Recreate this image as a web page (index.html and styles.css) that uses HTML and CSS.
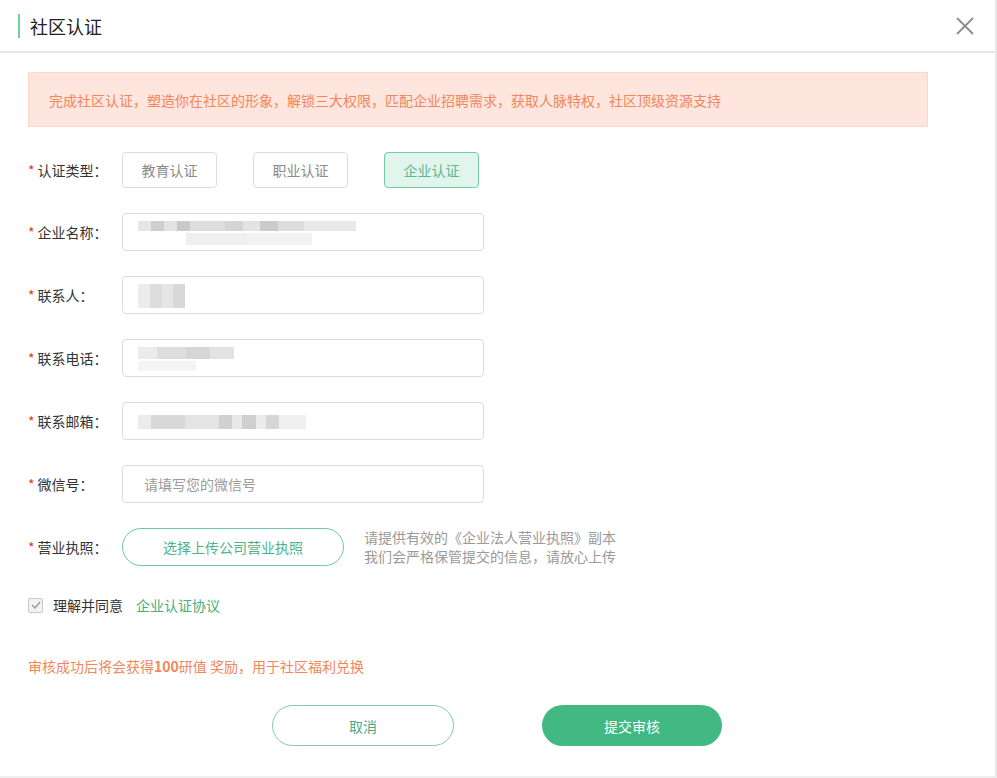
FILE: index.html
```html
<!DOCTYPE html>
<html lang="zh-CN">
<head>
  <meta charset="UTF-8" />
  <title>社区认证</title>
  <link rel="stylesheet" href="styles.css">
</head>
<body>
  <div class="dialog">
    <div class="dialog-head">
      <h1 class="dialog-title">社区认证</h1>
      <button class="close-btn" aria-label="关闭">
        <svg width="20" height="20" viewBox="0 0 20 20"><path d="M2 2L18 18M18 2L2 18" stroke="#8c8c8c" stroke-width="1.8" fill="none"/></svg>
      </button>
    </div>

    <div class="dialog-body">
      <div class="notice">完成社区认证，塑造你在社区的形象，解锁三大权限，匹配企业招聘需求，获取人脉特权，社区顶级资源支持</div>

      <div class="form-row">
        <label class="label"><i>*</i>认证类型：</label>
        <div class="type-group">
          <button class="type-btn">教育认证</button>
          <button class="type-btn">职业认证</button>
          <button class="type-btn active">企业认证</button>
        </div>
      </div>

      <div class="form-row">
        <label class="label"><i>*</i>企业名称：</label>
        <div class="input">
          <span class="blur blur-long"></span>
        </div>
      </div>

      <div class="form-row">
        <label class="label"><i>*</i>联系人：</label>
        <div class="input">
          <span class="blur blur-short"></span>
        </div>
      </div>

      <div class="form-row">
        <label class="label"><i>*</i>联系电话：</label>
        <div class="input">
          <span class="blur blur-phone"></span>
        </div>
      </div>

      <div class="form-row">
        <label class="label"><i>*</i>联系邮箱：</label>
        <div class="input">
          <span class="blur blur-mail"></span>
        </div>
      </div>

      <div class="form-row">
        <label class="label"><i>*</i>微信号：</label>
        <div class="input placeholder">请填写您的微信号</div>
      </div>

      <div class="form-row upload-row">
        <label class="label"><i>*</i>营业执照：</label>
        <button class="upload-btn">选择上传公司营业执照</button>
        <p class="upload-tip">请提供有效的《企业法人营业执照》副本<br>我们会严格保管提交的信息，请放心上传</p>
      </div>

      <div class="agree">
        <span class="checkbox">
          <svg width="10" height="8" viewBox="0 0 10 8"><path d="M1 4L4 7L9 1" stroke="#9a9a9a" stroke-width="1.4" fill="none"/></svg>
        </span>
        <span class="agree-text">理解并同意</span>
        <a class="agree-link" href="#">企业认证协议</a>
      </div>

      <p class="reward">审核成功后将会获得<b>100</b>研值 奖励，用于社区福利兑换</p>

      <div class="actions">
        <button class="btn btn-cancel">取消</button>
        <button class="btn btn-submit">提交审核</button>
      </div>
    </div>
  </div>
</body>
</html>
```

FILE: styles.css
```css
/* Reset & base */
*, *::before, *::after {
  box-sizing: border-box;
}
body {
  margin: 0;
  font-family: "Noto Sans CJK SC", "Noto Sans", sans-serif;
  background: #ffffff;
  color: #333;
  font-size: 14px;
}
button {
  font-family: inherit;
  cursor: pointer;
}

/* Dialog shell */
.dialog {
  width: 997px;
  height: 778px;
  border-right: 2px solid #e8e8e8;
  border-bottom: 2px solid #eeeeee;
}
.dialog-head {
  height: 53px;
  display: flex;
  align-items: center;
  justify-content: space-between;
  padding: 0 20px 0 18px;
  border-bottom: 2px solid #e6e6e6;
}
.dialog-title {
  margin: 0;
  font-size: 18px;
  font-weight: 400;
  color: #222;
  line-height: 24px;
  border-left: 2px solid #6fcfa8;
  padding-left: 10px;
}
.close-btn {
  background: none;
  border: none;
  padding: 0;
  width: 20px;
  height: 20px;
  display: flex;
}

/* Body */
.dialog-body {
  padding: 19px 0 0 28px;
}
.notice {
  width: 900px;
  height: 55px;
  background: #fee5dd;
  border: 1px solid #fbd6c9;
  color: #f2875a;
  font-size: 14px;
  display: flex;
  align-items: center;
  padding-left: 20px;
}

/* Form rows */
.form-row {
  display: flex;
  align-items: center;
  margin-top: 25px;
}
.label {
  width: 94px;
  flex-shrink: 0;
  color: #333;
}
.label i {
  font-style: normal;
  color: #e5342f;
  margin-right: 3px;
}
.type-group {
  display: flex;
  gap: 36px;
}
.type-btn {
  width: 95px;
  height: 36px;
  background: #fff;
  border: 1px solid #dcdcdc;
  border-radius: 4px;
  color: #8a8a8a;
  font-size: 14px;
}
.type-btn.active {
  background: #e2f5ec;
  border-color: #74cba4;
  color: #5cb88f;
}
.input {
  width: 362px;
  height: 38px;
  border: 1px solid #dcdcdc;
  border-radius: 4px;
  display: flex;
  align-items: center;
  padding-left: 15px;
}
.input.placeholder {
  padding-left: 21px;
  color: #9b9b9b;
  font-size: 14px;
}

/* Pixelated placeholders for hidden values */
.blur {
  display: block;
  height: 24px;
  margin-top: 2px;
}
.blur-long {
  width: 218px;
  background:
    linear-gradient(90deg, #e6e6e6 0 6%, #cfcfcf 6% 12%, #e2e2e2 12% 18%, #c8c8c8 18% 24%, #dedede 24% 40%, #d4d4d4 40% 48%, #e3e3e3 48% 56%, #cbcbcb 56% 64%, #dcdcdc 64% 76%, #e8e8e8 76% 100%) top / 100% 10px no-repeat,
    linear-gradient(90deg, #fff 0 22%, #efefef 22% 50%, #f2f2f2 50% 80%, #fff 80% 100%) bottom / 100% 12px no-repeat;
}
.blur-short {
  width: 47px;
  background: linear-gradient(90deg, #ececec 0 25%, #dcdcdc 25% 50%, #e5e5e5 50% 75%, #d8d8d8 75% 100%);
}
.blur-phone {
  width: 96px;
  background:
    linear-gradient(90deg, #ebebeb 0 20%, #dedede 20% 50%, #d6d6d6 50% 75%, #e2e2e2 75% 100%) top / 100% 12px no-repeat,
    linear-gradient(90deg, #f4f4f4 0 60%, #fff 60% 100%) bottom / 100% 10px no-repeat;
}
.blur-mail {
  width: 168px;
  height: 14px;
  background: linear-gradient(90deg, #ececec 0 8%, #d8d8d8 8% 28%, #e4e4e4 28% 48%, #d0d0d0 48% 56%, #e8e8e8 56% 62%, #cfcfcf 62% 70%, #ebebeb 70% 76%, #d6d6d6 76% 84%, #f0f0f0 84% 100%);
}

/* Upload */
.upload-row {
  margin-top: 25px;
}
.upload-btn {
  width: 222px;
  height: 38px;
  border: 1px solid #6fc8a6;
  border-radius: 19px;
  background: #fff;
  color: #4fb387;
  font-size: 14px;
}
.upload-tip {
  margin: 0 0 0 20px;
  color: #9a9a9a;
  font-size: 14px;
  line-height: 19px;
}

/* Agreement */
.agree {
  display: flex;
  align-items: center;
  margin-top: 29px;
  height: 20px;
}
.checkbox {
  width: 15px;
  height: 15px;
  border: 1px solid #c8c8c8;
  border-radius: 2px;
  background: #f3f3f3;
  display: flex;
  align-items: center;
  justify-content: center;
}
.agree-text {
  margin-left: 10px;
  color: #333;
}
.agree-link {
  margin-left: 13px;
  color: #45b07f;
  text-decoration: none;
}

/* Reward note */
.reward {
  margin: 41px 0 0;
  color: #f2875a;
  font-size: 14px;
  line-height: 20px;
}

/* Footer buttons */
.actions {
  display: flex;
  gap: 88px;
  margin: 29px 0 0 244px;
}
.btn {
  width: 182px;
  height: 41px;
  border-radius: 21px;
  font-size: 14px;
}
.btn-cancel {
  background: #fff;
  border: 1px solid #7fcab0;
  color: #4fa983;
}
.btn-submit {
  width: 180px;
  background: #42b883;
  border: none;
  color: #fff;
}
```
